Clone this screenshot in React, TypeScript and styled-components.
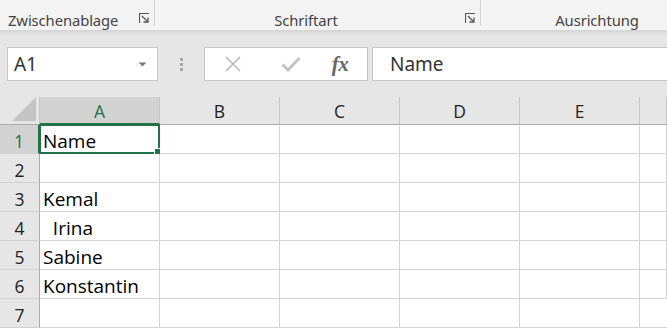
import React from 'react';
import styled, { createGlobalStyle } from 'styled-components';

const GREEN = '#217346';
const UI_FONT = '"Noto Sans", "Open Sans", "DejaVu Sans", sans-serif';
const CELL_FONT = '"Open Sans", "Noto Sans", sans-serif';

const GlobalStyle = createGlobalStyle`
  html, body {
    margin: 0;
    padding: 0;
    background: #e6e6e6;
    overflow: hidden;
  }
  body {
    font-family: ${UI_FONT};
  }
`;

const COLUMNS = ['A', 'B', 'C', 'D', 'E', ''];
const ROWS: string[] = ['Name', '', 'Kemal', '  Irina', 'Sabine', 'Konstantin', ''];

function LauncherIcon() {
  return (
    <svg width="11" height="11" viewBox="0 0 11 11">
      <path d="M0.5 10 V0.5 H10" fill="none" stroke="#555" strokeWidth="1.2" />
      <path d="M3 3 L8.5 8.5" fill="none" stroke="#555" strokeWidth="1.3" />
      <path d="M4.5 9 H9 V4.5" fill="none" stroke="#555" strokeWidth="1.3" />
    </svg>
  );
}

export default function App() {
  return (
    <>
      <GlobalStyle />
      <Page>
        <Ribbon>
          <RibbonGroup $width={155} $align="left">
            <GroupLabel>Zwischenablage</GroupLabel>
            <Launcher>
              <LauncherIcon />
            </Launcher>
          </RibbonGroup>
          <RibbonGroup $width={326} $align="center" $padRight={24}>
            <GroupLabel>Schriftart</GroupLabel>
            <Launcher>
              <LauncherIcon />
            </Launcher>
          </RibbonGroup>
          <RibbonGroup $width={232} $align="center" $last>
            <GroupLabel>Ausrichtung</GroupLabel>
          </RibbonGroup>
        </Ribbon>
        <RibbonShadow />

        <FormulaBar>
          <NameBox>
            <NameBoxText>A1</NameBoxText>
            <svg width="9" height="5" viewBox="0 0 9 5">
              <path d="M0.5 0.5 H8.5 L4.5 4.5 Z" fill="#777" />
            </svg>
          </NameBox>
          <Grip>
            <GripDot />
            <GripDot />
            <GripDot />
          </Grip>
          <FxBox>
            <FxButton $after={18}>
              <svg width="18" height="18" viewBox="0 0 18 18">
                <path d="M2 2 L16 16 M16 2 L2 16" stroke="#b8b8b8" strokeWidth="1.6" fill="none" />
              </svg>
            </FxButton>
            <FxButton $after={9}>
              <svg width="20" height="16" viewBox="0 0 20 16">
                <path d="M1.5 8.5 L7 14 L18.5 2" stroke="#c4c4c4" strokeWidth="3" fill="none" />
              </svg>
            </FxButton>
            <FxButton $after={0}>
              <FxLabel>fx</FxLabel>
            </FxButton>
          </FxBox>
          <FormulaInput>Name</FormulaInput>
        </FormulaBar>

        <Sheet>
          <Corner>
            <svg width="24" height="24" viewBox="0 0 24 24">
              <path d="M24 0 V24 H0 Z" fill="#c4c4c4" />
            </svg>
          </Corner>
          {COLUMNS.map((col, i) => (
            <ColHeader key={`h${i}`} $active={col === 'A'}>
              {col}
            </ColHeader>
          ))}
          {ROWS.map((value, r) => (
            <React.Fragment key={r}>
              <RowHeader $active={r === 0}>{r + 1}</RowHeader>
              {COLUMNS.map((col, c) => (
                <Cell key={c}>
                  {c === 0 && value}
                  {r === 0 && c === 0 && (
                    <Selection>
                      <FillHandle />
                    </Selection>
                  )}
                </Cell>
              ))}
            </React.Fragment>
          ))}
        </Sheet>
      </Page>
    </>
  );
}

/* --- Styled Components --- */

const Page = styled.div`
  width: 667px;
  height: 328px;
  background: #e6e6e6;
  overflow: hidden;
`;

const Ribbon = styled.div`
  display: flex;
  height: 30px;
  background: #f3f3f3;
`;

const RibbonGroup = styled.div<{
  $width: number;
  $align: 'left' | 'center';
  $padRight?: number;
  $last?: boolean;
}>`
  position: relative;
  flex-shrink: 0;
  width: ${({ $width }) => $width}px;
  display: flex;
  align-items: center;
  justify-content: ${({ $align }) => ($align === 'left' ? 'flex-start' : 'center')};
  padding-left: ${({ $align }) => ($align === 'left' ? '8px' : '0')};
  padding-right: ${({ $padRight }) => $padRight ?? 0}px;
  padding-top: 9px;
  box-sizing: border-box;
  &::after {
    content: '';
    display: ${({ $last }) => ($last ? 'none' : 'block')};
    position: absolute;
    right: 0;
    top: 0;
    height: 26px;
    width: 1px;
    background: #d4d4d4;
  }
`;

const GroupLabel = styled.span`
  font-size: 14.8px;
  color: #444;
  letter-spacing: -0.1px;
`;

const Launcher = styled.span`
  position: absolute;
  right: 5px;
  top: 13px;
  display: flex;
`;

const RibbonShadow = styled.div`
  height: 6px;
  background: linear-gradient(#d4d4d4, #e6e6e6);
`;

const FormulaBar = styled.div`
  display: flex;
  align-items: stretch;
  height: 34px;
  padding: 11px 0 0 7px;
`;

const NameBox = styled.div`
  width: 151px;
  box-sizing: border-box;
  background: #fff;
  border: 1px solid #c6c6c6;
  display: flex;
  align-items: center;
  justify-content: space-between;
  padding: 0 10px 0 6px;
`;

const NameBoxText = styled.span`
  font-size: 19px;
  color: #333;
`;

const Grip = styled.div`
  width: 46px;
  display: flex;
  flex-direction: column;
  align-items: center;
  justify-content: center;
  gap: 2px;
`;

const GripDot = styled.span`
  width: 3px;
  height: 3px;
  background: #a8a8a8;
`;

const FxBox = styled.div`
  width: 164px;
  box-sizing: border-box;
  background: #fff;
  border: 1px solid #c6c6c6;
  display: flex;
  align-items: center;
  padding-left: 8px;
`;

const FxButton = styled.span<{ $after: number }>`
  width: 40px;
  margin-right: ${({ $after }) => $after}px;
  display: flex;
  justify-content: center;
  align-items: center;
`;

const FxLabel = styled.span`
  font-family: "Liberation Serif", "DejaVu Serif", serif;
  font-style: italic;
  font-weight: bold;
  font-size: 21px;
  color: #666;
  letter-spacing: -0.5px;
`;

const FormulaInput = styled.div`
  flex: 1;
  margin-left: 4px;
  background: #fff;
  border: 1px solid #c6c6c6;
  border-right: none;
  display: flex;
  align-items: center;
  padding-left: 17px;
  font-size: 19px;
  color: #333;
`;

const Sheet = styled.div`
  display: grid;
  grid-template-columns: 40px 120px 120px 120px 120px 120px 1fr;
  grid-template-rows: 28px repeat(7, 29px);
  margin-top: 16px;
  font-family: ${CELL_FONT};
`;

const Corner = styled.div`
  display: flex;
  align-items: flex-end;
  justify-content: flex-end;
  padding: 0 3px 3px 0;
  border-right: 1px solid #c6c6c6;
  border-bottom: 1px solid #ababab;
`;

const ColHeader = styled.div<{ $active: boolean }>`
  display: flex;
  align-items: center;
  justify-content: center;
  padding-top: 1px;
  font-size: 17.5px;
  color: ${({ $active }) => ($active ? GREEN : '#222')};
  background: ${({ $active }) => ($active ? '#d2d2d2' : '#e6e6e6')};
  border-right: 1px solid #c6c6c6;
  border-bottom: ${({ $active }) => ($active ? `2px solid ${GREEN}` : '1px solid #ababab')};
  box-sizing: border-box;
  &:last-child {
    border-right: none;
  }
`;

const RowHeader = styled.div<{ $active: boolean }>`
  display: flex;
  align-items: center;
  justify-content: center;
  padding-top: 3px;
  font-size: 17.5px;
  color: ${({ $active }) => ($active ? GREEN : '#222')};
  background: ${({ $active }) => ($active ? '#d2d2d2' : '#e6e6e6')};
  border-right: ${({ $active }) => ($active ? `2px solid ${GREEN}` : '1px solid #ababab')};
  border-bottom: 1px solid #d0d0d0;
  box-sizing: border-box;
`;

const Cell = styled.div`
  position: relative;
  display: flex;
  align-items: flex-end;
  padding: 0 0 0 3px;
  background: #fff;
  border-right: 1px solid #d4d4d4;
  border-bottom: 1px solid #d4d4d4;
  font-size: 19px;
  line-height: 23px;
  color: #000;
  white-space: pre;
  &:last-child {
    border-right: none;
  }
`;

const Selection = styled.div`
  position: absolute;
  left: -1px;
  top: -1px;
  right: -1px;
  bottom: -1px;
  border: 2px solid ${GREEN};
  pointer-events: none;
`;

const FillHandle = styled.div`
  position: absolute;
  right: -5px;
  bottom: -5px;
  width: 7px;
  height: 7px;
  background: ${GREEN};
  border: 1px solid #fff;
`;
